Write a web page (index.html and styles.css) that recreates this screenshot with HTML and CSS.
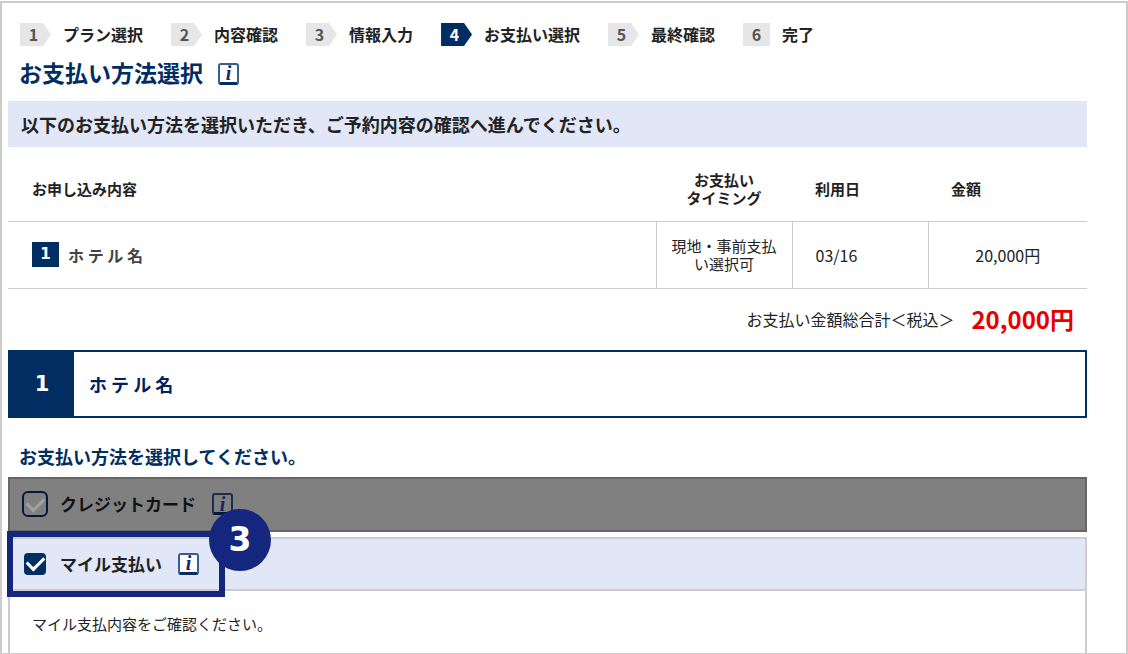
FILE: index.html
```html
<!doctype html>
<html lang="ja">
  <head>
    <meta charset="utf-8">
    <meta name="viewport" content="width=device-width,initial-scale=1">
    <title>お支払い方法選択</title>
    <link rel="stylesheet" href="styles.css">
  </head>
  <body>
    <main class="frame">
      <ol class="steps">
        <li><span class="step-num">1</span>プラン選択</li>
        <li><span class="step-num">2</span>内容確認</li>
        <li><span class="step-num">3</span>情報入力</li>
        <li class="current"><span class="step-num">4</span>お支払い選択</li>
        <li><span class="step-num">5</span>最終確認</li>
        <li class="last"><span class="step-num">6</span>完了</li>
      </ol>

      <div class="heading">
        <h1>お支払い方法選択</h1>
        <button type="button" class="info">i</button>
      </div>

      <p class="lead">以下のお支払い方法を選択いただき、ご予約内容の確認へ進んでください。</p>

      <table class="items">
        <thead>
          <tr>
            <th class="col-name">お申し込み内容</th>
            <th class="col-timing">お支払い
タイミング</th>
            <th class="col-date">利用日</th>
            <th class="col-price">金額</th>
          </tr>
        </thead>
        <tbody>
          <tr>
            <td class="col-name"><div class="item"><span class="item-num">1</span><span class="item-name">ホ テ ル 名</span></div></td>
            <td class="col-timing">現地・事前支払い選択可</td>
            <td class="col-date">03/16</td>
            <td class="col-price">20,000円</td>
          </tr>
        </tbody>
      </table>

      <p class="total">お支払い金額総合計＜税込＞<strong>20,000円</strong></p>

      <section class="hotel">
        <span class="hotel-num">1</span>
        <h2>ホ テ ル 名</h2>
      </section>

      <h3 class="prompt">お支払い方法を選択してください。</h3>

      <div class="option disabled">
        <input type="checkbox" id="card" disabled>
        <label for="card">クレジットカード</label>
        <button type="button" class="info">i</button>
      </div>

      <div class="option">
        <input type="checkbox" id="mile" checked>
        <label for="mile">マイル支払い</label>
        <button type="button" class="info">i</button>
        <div class="highlight"><span class="marker">3</span></div>
      </div>
      <div class="detail">マイル支払内容をご確認ください。</div>
    </main>
  </body>
</html>
```
FILE: styles.css
```css
*{
  box-sizing:border-box;
}
body{
  margin:0;
  padding-top:1px;
  background:#fff;
  color:#222;
  font-family:"Noto Sans CJK JP",sans-serif;
  font-size:15px;
  line-height:18px;
}
h1,h2,h3,p,ol{
  margin:0;
  padding:0;
}
.frame{
  display:flex;
  flex-direction:column;
  min-height:calc(100vh - 1px);
  padding:20px 39px 0 6px;
  border:2px solid #ccc;
  border-bottom-width:1px;
}

/* progress */
.steps{
  display:flex;
  gap:28px;
  padding-left:12px;
  list-style:none;
  font-size:16px;
  font-weight:bold;
  line-height:22px;
}
.steps li{
  display:flex;
  gap:12px;
  white-space:nowrap;
}
.step-num{
  width:31px;
  height:23px;
  padding-right:4px;
  background:#e6e6e6;
  color:#555;
  text-align:center;
  clip-path:polygon(0 0,23px 0,100% 50%,23px 100%,0 100%);
}
.current .step-num{
  background:#002d62;
  color:#fff;
}
.last .step-num{
  width:27px;
  padding:0;
  clip-path:none;
}

/* title */
.heading{
  display:flex;
  align-items:center;
  gap:15px;
  height:55px;
  padding-left:11px;
}
h1{
  padding-bottom:3px;
  color:#002d62;
  font-size:23px;
  line-height:32px;
}
.info{
  width:21px;
  height:22px;
  padding:0;
  border:2px solid #34608f;
  border-bottom:3px solid #002d62;
  border-radius:3px;
  background:#fff;
  color:#1b1f63;
  font:italic bold 20px/16px "Liberation Serif",serif;
  text-align:center;
}
.lead{
  padding:0 13px;
  background:#e1e7f7;
  font-size:18px;
  font-weight:bold;
  line-height:46px;
}

/* booked items */
.items{
  width:100%;
  table-layout:fixed;
  border-collapse:collapse;
}
.items th,
.items td{
  padding:0 12px;
  border-bottom:1px solid #ccc;
}
.items th{
  height:74px;
  padding-top:10px;
  white-space:pre-line;
}
.items td{
  height:67px;
}
.items td + td{
  border-left:1px solid #ccc;
}
.items .col-name{
  padding-left:24px;
  text-align:left;
}
.col-timing{
  width:136px;
  text-align:center;
}
.items .col-date{
  width:136px;
  padding-left:23px;
  text-align:left;
}
.col-price{
  width:159px;
  text-align:center;
}
.items th.col-price{
  padding-left:23px;
  text-align:left;
}
td.col-date,
td.col-price{
  font-size:16px;
}
.item{
  display:flex;
  align-items:center;
  gap:9px;
}
.item-num{
  width:27px;
  background:#002d62;
  color:#fff;
  font:bold 15px/25px "DejaVu Sans",sans-serif;
  text-align:center;
}
.item-name{
  color:#444;
  font-size:16px;
  font-weight:bold;
}
.total{
  display:flex;
  align-items:center;
  justify-content:flex-end;
  gap:17px;
  height:61px;
  padding-right:13px;
  font-size:16px;
}
.total strong{
  color:#e60000;
  font-size:24px;
}

/* hotel */
.hotel{
  display:flex;
  align-items:center;
  height:68px;
  border:2px solid #002d62;
}
.hotel-num{
  width:64px;
  background:#002d62;
  color:#fff;
  font:bold 21px/64px "DejaVu Sans",sans-serif;
  text-align:center;
}
.hotel h2{
  padding-left:15px;
  color:#002060;
  font-size:18px;
}
.prompt{
  padding:29px 11px 12px;
  color:#002d62;
  font-size:18px;
}

/* payment methods */
.option{
  position:relative;
  display:flex;
  align-items:center;
  height:54px;
  padding-left:12px;
  border:2px solid #ccc;
  background:#e1e7f7;
}
.option.disabled{
  height:55px;
  margin-bottom:5px;
  border-color:#666;
  background:#808080;
}
.option label{
  margin:0 16px 0 12px;
  font-size:17px;
  font-weight:bold;
}
.option input{
  display:grid;
  place-items:center;
  appearance:none;
  width:26px;
  height:26px;
  margin:0;
  border:2px solid #e1e7f7;
  border-radius:6px;
  background:#002d62;
}
.option input::after{
  content:"";
  width:14px;
  height:8px;
  margin-bottom:4px;
  border:solid #fff;
  border-width:0 0 3px 3px;
  rotate:-45deg;
}
.option input:disabled{
  border-color:#001a3d;
  background:#808080;
}
.option input:disabled::after{
  border-color:#a0a0a0;
}
.disabled label{
  color:#111;
}
.disabled .info{
  border-color:#1a304a;
  border-bottom-color:#001a3d;
  background:#808080;
}
.highlight{
  position:absolute;
  top:-8px;
  left:-3px;
  width:218px;
  height:66px;
  border:6px solid #15267f;
  pointer-events:none;
}
.marker{
  position:absolute;
  top:-28px;
  right:-52px;
  width:62px;
  border-radius:50%;
  background:#15267f;
  color:#fff;
  font:bold 33px/62px "DejaVu Sans",sans-serif;
  text-align:center;
}
.detail{
  flex:1;
  padding:24px 22px 12px;
  border:solid #ccc;
  border-width:0 2px;
}
```
